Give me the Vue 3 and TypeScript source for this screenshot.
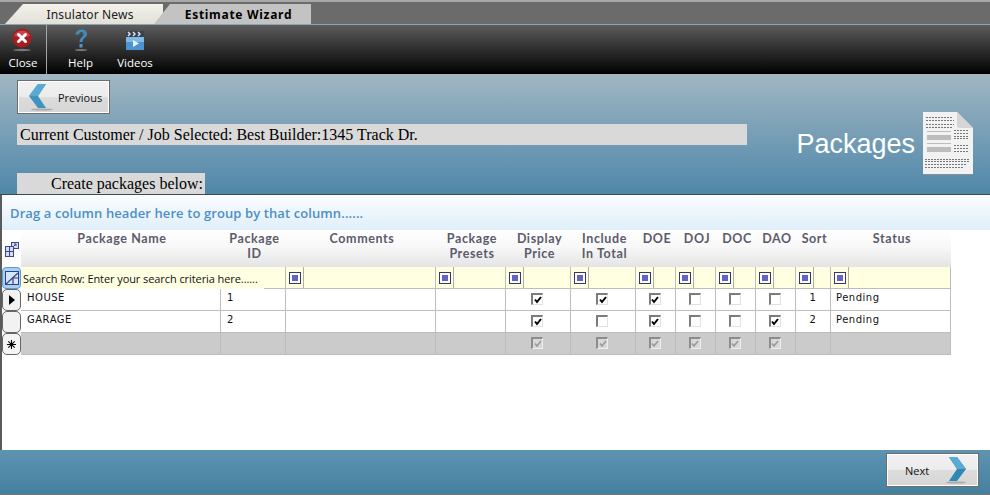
<script setup lang="ts">
interface Col { label: string[]; kind: 'text' | 'check' | 'num'; key: string; }
const cols: Col[] = [
  { label: ['Package Name'], kind: 'text', key: 'name' },
  { label: ['Package', 'ID'], kind: 'text', key: 'id' },
  { label: ['Comments'], kind: 'text', key: 'comments' },
  { label: ['Package', 'Presets'], kind: 'text', key: 'presets' },
  { label: ['Display', 'Price'], kind: 'check', key: 'display' },
  { label: ['Include', 'In Total'], kind: 'check', key: 'include' },
  { label: ['DOE'], kind: 'check', key: 'doe' },
  { label: ['DOJ'], kind: 'check', key: 'doj' },
  { label: ['DOC'], kind: 'check', key: 'doc' },
  { label: ['DAO'], kind: 'check', key: 'dao' },
  { label: ['Sort'], kind: 'num', key: 'sort' },
  { label: ['Status'], kind: 'text', key: 'status' },
];
type Row = Record<string, string | boolean>;
const rows: Row[] = [
  { name: 'HOUSE', id: '1', comments: '', presets: '', display: true, include: true, doe: true, doj: false, doc: false, dao: false, sort: '1', status: 'Pending' },
  { name: 'GARAGE', id: '2', comments: '', presets: '', display: true, include: false, doe: true, doj: false, doc: false, dao: true, sort: '2', status: 'Pending' },
];
const filterCols = cols.slice(2);
</script>

<template>
  <div class="page">
    <div class="tabs">
      <div class="tab inactive"><span>Insulator News</span></div>
      <div class="tab active"><span>Estimate Wizard</span></div>
    </div>

    <div class="toolbar">
      <div class="tool close-tool">
        <svg width="24" height="24" viewBox="0 0 24 24">
          <ellipse cx="11" cy="22" rx="9" ry="1.2" fill="#777" />
          <circle cx="11" cy="10" r="9.500" fill="#a81c20" />
          <path d="M3 8a8.500 8 0 0 1 16 0a14 6 0 0 1-16 0z" fill="#c9444a" />
          <path d="M7.500 6.500l7 7M14.500 6.500l-7 7" stroke="#fff" stroke-width="3" stroke-linecap="round" />
        </svg>
        <span>Close</span>
      </div>
      <div class="tool help-tool">
        <svg width="24" height="24" viewBox="0 0 24 24">
          <ellipse cx="12" cy="22" rx="6" ry="1.100" fill="#777" />
          <path d="M6.500 6.500C7 3 9.500 1.500 12.500 1.500c3.500 0 5.500 2 5.500 4.500 0 3.500-4.500 4-4.500 8h-3c0-4.500 4-5 4-8 0-1.200-.8-2-2-2-1.500 0-2.300 1-2.500 2.500z" fill="#3f8dbb" />
          <rect x="10.500" y="16" width="3" height="3.500" fill="#4d9ac8" />
        </svg>
        <span>Help</span>
      </div>
      <div class="tool videos-tool">
        <svg width="24" height="24" viewBox="0 0 24 24">
          <rect x="3" y="3" width="18" height="6" fill="#39424f" />
          <path d="M5 4l2 2-2 2M10 4l2 2-2 2M15 4l2 2-2 2" stroke="#e4e8ee" stroke-width="1.400" fill="none" />
          <rect x="3" y="9" width="18" height="13" fill="#4c93d0" />
          <rect x="3" y="9" width="18" height="5" fill="#80b8e6" />
          <path d="M10 12l6 3.500-6 3.500z" fill="#e8f2fb" />
        </svg>
        <span>Videos</span>
      </div>
    </div>

    <div class="banner">
      <div class="banner-left">
        <button class="nav-btn prev-btn">
          <svg width="26" height="28" viewBox="0 0 26 28">
            <ellipse cx="14" cy="26.500" rx="11" ry="1" fill="#aaa" />
            <path d="M18 1h-8L1 13l9 12h8l-8-12z" fill="#3f93bd" />
            <path d="M18 1h-8L1 13h9z" fill="#5aaad4" />
          </svg>
          <span>Previous</span>
        </button>
        <div class="customer">Current Customer / Job Selected: Best Builder:1345 Track Dr.</div>
        <div class="create">Create packages below:</div>
      </div>
      <div class="banner-right">
        <span class="title">Packages</span>
        <svg class="doc" width="52" height="64" viewBox="0 0 52 64">
          <path d="M1 1h34l16 16v46H1z" fill="#8a8f92" />
          <path d="M1 0h34l16 16v46H1z" fill="#f2f2f2" />
          <path d="M35 0l16 16H38q-3 0-3-3z" fill="#d5d5d5" />
          <g stroke="#777" stroke-width="1" stroke-dasharray="2 1" fill="none">
            <path d="M4 5.500h26M4 8.500h28M4 12.500h28M4 15.500h26" />
            <path d="M32 18.500h15M32 21.500h15M32 24.500h15M32 26.500h15M32 33.500h15M32 36.500h15M32 39.500h15" />
            <path d="M3 47.500h45M3 49.500h45M3 52.500h42M3 55.500h38" />
          </g>
          <g fill="#bcbcbc">
            <rect x="5" y="19" width="24" height="1" /><rect x="5" y="23" width="24" height="5" />
            <rect x="5" y="31" width="24" height="1" /><rect x="5" y="35" width="24" height="5" />
          </g>
        </svg>
      </div>
    </div>

    <div class="body">
      <div class="group-band">Drag a column header here to group by that column......</div>
      <div class="grid">
        <!-- header -->
        <div class="corner">
          <svg width="16" height="17" viewBox="0 0 16 17" fill="#d3dcf2" stroke="#3b4a8c">
            <rect x="7.500" y="1.500" width="7" height="6" /><path d="M9 6l3-3M10 3h2v2" fill="none" />
            <rect x="1.500" y="5.500" width="8" height="5" /><rect x="1.500" y="10.500" width="8" height="5" /><path d="M5.500 5.500v10" />
          </svg>
        </div>
        <div v-for="c in cols" :key="'h' + c.key" class="hcell">
          <span v-for="l in c.label" :key="l">{{ l }}</span>
        </div>

        <!-- search row -->
        <div class="search-rh">
          <svg width="14" height="14" viewBox="0 0 14 14" fill="none">
            <rect x=".5" y=".5" width="13" height="13" fill="#d7e6f6" stroke="#333f8e" />
            <path d="M1 13L13 2M8 13V7h5" stroke="#333f8e" stroke-width="1.200" />
          </svg>
        </div>
        <div class="search-text"><span>Search Row: Enter your search criteria here......</span></div>
        <div v-for="c in filterCols" :key="'f' + c.key" class="fcell">
          <div class="fbtn"><i></i></div>
        </div>

        <!-- rows -->
        <template v-for="(r, i) in rows" :key="i">
          <div class="rh">
            <svg v-if="i === 0" width="6" height="10" viewBox="0 0 6 10"><path d="M0 0l6 5-6 5z" fill="#000" /></svg>
          </div>
          <div v-for="c in cols" :key="c.key" class="cell" :class="['k-' + c.kind, 'c-' + c.key]">
            <span v-if="c.kind === 'check'" class="cb">
              <svg v-if="r[c.key]" width="8" height="8" viewBox="0 0 8 8"><path d="M1 3.500l2 2.500 4-5" stroke="#000" stroke-width="2" fill="none" /></svg>
            </span>
            <template v-else>{{ r[c.key] }}</template>
          </div>
        </template>

        <!-- new row -->
        <div class="rh star">
          <svg width="9" height="9" viewBox="0 0 9 9"><path d="M4.500 0v9M0 4.500h9M1.300 1.300l6.400 6.400M7.700 1.300L1.300 7.700" stroke="#000" stroke-width="1.100" /></svg>
        </div>
        <div v-for="c in cols" :key="'n' + c.key" class="cell newcell" :class="'k-' + c.kind">
          <span v-if="c.kind === 'check'" class="cb disabled">
            <svg width="8" height="8" viewBox="0 0 8 8"><path d="M1 3.500l2 2.500 4-5" stroke="#999" stroke-width="1.500" fill="none" /></svg>
          </span>
        </div>
      </div>
    </div>

    <div class="footer">
      <button class="nav-btn next-btn">
        <span>Next</span>
        <svg width="22" height="28" viewBox="0 0 22 28">
          <ellipse cx="10" cy="26.500" rx="10" ry="1" fill="#aaa" />
          <path d="M3 1h8l9 12-9 12H3l8-12z" fill="#2f87b3" />
          <path d="M3 1h8l9 12h-9z" fill="#5aaad4" />
        </svg>
      </button>
    </div>
  </div>
</template>

<style>
html, body { margin: 0; padding: 0; background: #fff; }
</style>

<style scoped>
.page { width: 990px; height: 495px; display: flex; flex-direction: column; overflow: hidden; background: #fff; }

.tabs {
  height: 25px; box-sizing: border-box; display: flex; align-items: flex-end; padding-left: 5px;
  border-top: 2px solid #a8a8a8; border-bottom: 1px solid #8fa3b3;
  background: #6b6b6b;
  font-family: "Noto Sans", sans-serif; font-size: 12px;
}
.tab { height: 20px; display: flex; align-items: center; justify-content: center; box-sizing: border-box; }
.inactive {
  width: 158px; background: linear-gradient(#f3f1ea, #e2e1d9); color: #1b1b1b; padding-left: 12px; letter-spacing: .15px;
  clip-path: polygon(0 100%, 18px 0, 100% 0, 100% 100%);
}
.active {
  width: 157px; margin-left: -9px; background: #c3c3c3; color: #000; font-weight: 700; padding-left: 12px; letter-spacing: .7px;
  clip-path: polygon(0 100%, 16px 0, 100% 0, 100% 100%);
}

.toolbar {
  height: 49px; flex: none; display: flex; color: #fff;
  background: linear-gradient(#5c5c5c, #000);
  font-family: "Open Sans", sans-serif; font-size: 11.5px;
}
.tool { display: flex; flex-direction: column; align-items: center; padding-top: 3px; box-sizing: border-box; }
.tool span { line-height: 16px; margin-top: 3px; }
.close-tool { width: 47px; border-right: 1px solid #a5a5a5; }
.help-tool { width: 63px; margin-left: 2px; }
.videos-tool { width: 46px; }

.banner {
  height: 121px; flex: none; display: flex; justify-content: space-between; box-sizing: border-box;
  padding: 6px 16px 0 17px; border-bottom: 1px solid #3f4a52;
  background: linear-gradient(#a0b6c3, #4f87a9);
}
.banner-left { display: flex; flex-direction: column; align-items: flex-start; }
.nav-btn {
  width: 93px; height: 34px; box-sizing: border-box; padding: 0; margin: 0;
  display: flex; align-items: center; border: 1px solid #6d6d6d; outline: 1px solid #fff; outline-offset: -2px;
  background: linear-gradient(#f1f1f1 0, #ececec 48%, #dcdcdc 52%, #d5d5d5 100%);
  font-family: "Open Sans", sans-serif; font-size: 11px; color: #111;
}
.prev-btn { padding-left: 10px; gap: 4px; }
.customer {
  width: 730px; height: 21px; margin-top: 10px; padding-left: 3px; box-sizing: border-box;
  background: #d9d9d9; color: #000; font: 16px/21px "Liberation Serif", serif;
}
.create {
  width: 188px; height: 21px; margin-top: 28px; padding-left: 34px; box-sizing: border-box;
  background: #d9d9d9; color: #000; font: 16px/21px "Liberation Serif", serif;
}
.banner-right { display: flex; align-items: flex-start; padding-top: 32px; }
.title { font: 27px/1 "Liberation Sans", sans-serif; color: #fff; margin: 19px 7px 0 0; }

.body { flex: 1; border-left: 2px solid #5a5a5a; min-height: 0; }
.group-band {
  height: 35px; box-sizing: border-box; padding-left: 8px; display: flex; align-items: center;
  background: linear-gradient(#fbfdfe, #dfeffa);
  color: #4d8fc4; font: 600 13px "Open Sans", sans-serif; letter-spacing: .1px;
}

.grid {
  display: grid; width: 949px;
  grid-template-columns: 19px 200px 65px 150px 70px 65px 65px 40px 40px 40px 40px 35px 120px;
  grid-template-rows: 37px 22px 22px 22px 22px;
}
.corner { display: flex; align-items: center; justify-content: center; padding-top: 2px; }
.hcell {
  display: flex; flex-direction: column; align-items: center; padding: 1px 0 0 2px; box-sizing: border-box;
  background: linear-gradient(#fff 0, #f8f8f8 45%, #e4e4e4 100%);
  color: #5b5b6b; font: 700 12.5px/15px "Lato", sans-serif; letter-spacing: .6px;
}
.rh {
  box-sizing: border-box; display: flex; align-items: center; justify-content: center;
  border: 1px solid #666; border-radius: 5px; background: #f2f2f2;
}
.search-rh {
  box-sizing: border-box; display: flex; align-items: center; justify-content: center;
  border: 1px solid #5b9bd0; border-radius: 4px; background: #a8d0f0;
}
.star { background: #f5f5f5; }
.search-text {
  grid-column: span 2; box-sizing: border-box; display: flex; align-items: center; padding-left: 2px;
  border-right: 1px solid #bdbdbd;
  background: linear-gradient(#bdbdbd, #bdbdbd) 243px 100% / 21px 1px no-repeat, #ffffe2;
  color: #111;
}
.search-text span { font: 11px "Open Sans", sans-serif; letter-spacing: -.08px; }
.fcell {
  box-sizing: border-box; background: #ffffe2; border-right: 1px solid #bdbdbd; border-bottom: 1px solid #bdbdbd;
  display: flex; align-items: stretch;
}
.fbtn {
  width: 18px; box-sizing: border-box; border-right: 1px solid #b0b0a0; display: flex; align-items: center; justify-content: center;
}
.fbtn i {
  display: block; width: 12px; height: 12px; box-sizing: border-box; border: 1px solid #33386e; background: #fff; padding: 2px;
  background-image: linear-gradient(#6464c8, #6464c8); background-size: 6px 6px; background-position: center; background-repeat: no-repeat;
}
.cell {
  box-sizing: border-box; border-right: 1px solid #bdbdbd; border-bottom: 1px solid #bdbdbd; background: #fff;
  color: #111; font: 10px/1 "DejaVu Sans", sans-serif; letter-spacing: .5px;
  display: flex; align-items: flex-start; padding: 4px 0 0 6px;
}
.c-status { padding-left: 5px; }
.k-check { justify-content: center; padding: 4px 2px 0 0; }
.k-num { justify-content: center; padding-left: 0; }
.newcell { background: #cbcbcb; }
.cb {
  width: 12px; height: 12px; box-sizing: border-box; background: #fff; display: flex; align-items: center; justify-content: center;
  border-style: solid; border-width: 2px 1px 1px 2px; border-color: #7c7c7c #e2e2e2 #e2e2e2 #7c7c7c;
}
.cb.disabled { background: #d8d8d8; border-color: #8c8c8c #eee #eee #8c8c8c; }

.footer {
  height: 45px; flex: none; box-sizing: border-box; display: flex; justify-content: flex-end; align-items: flex-start;
  padding: 3px 11px 0 0; border-bottom: 1px solid #777;
  background: linear-gradient(#5f93b2, #44819f);
}
.next-btn { justify-content: flex-start; padding-left: 18px; gap: 17px; }
</style>
